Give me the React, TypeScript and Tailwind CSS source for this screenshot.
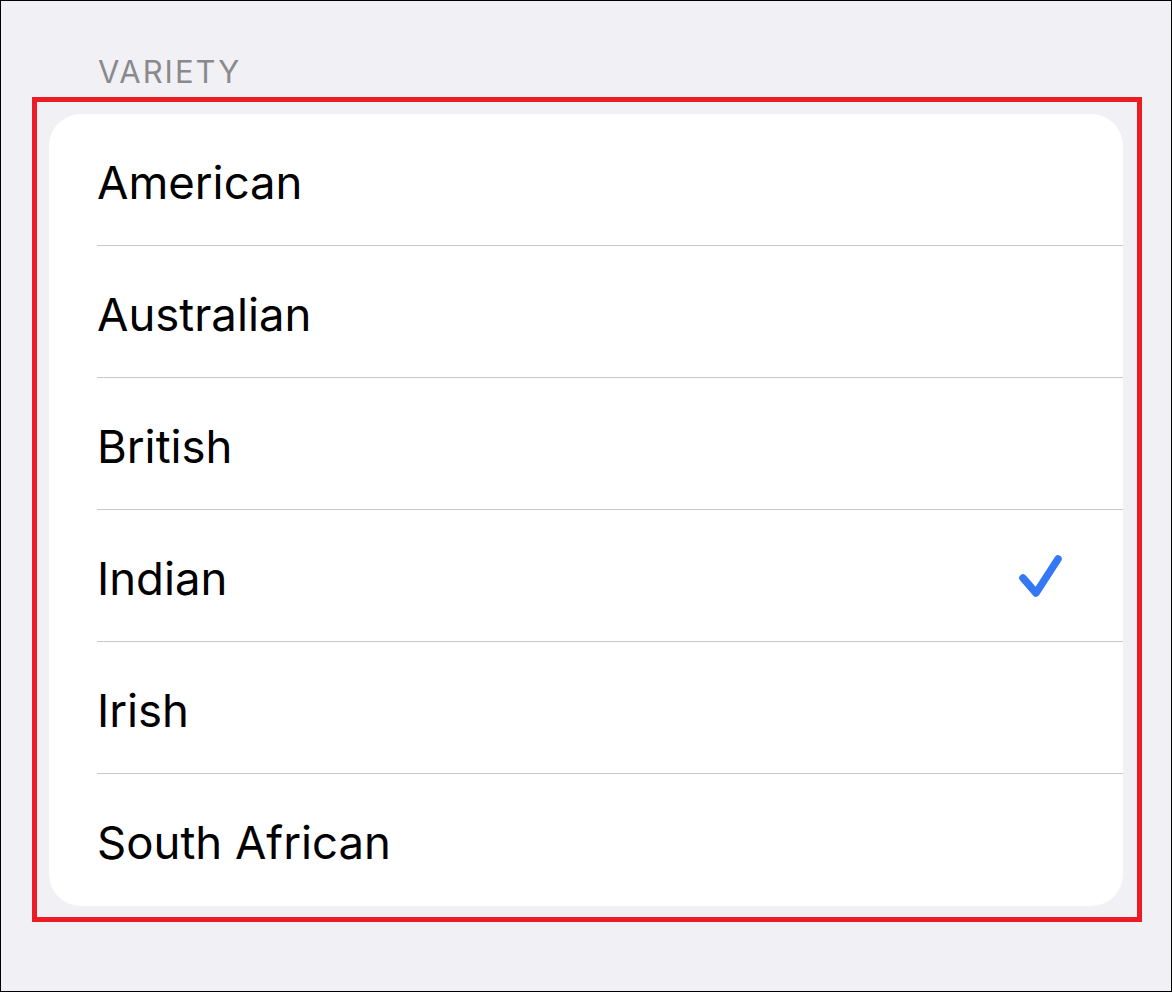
import React from 'react';

const VARIETIES = ['American', 'Australian', 'British', 'Indian', 'Irish', 'South African'];
const SELECTED = 'Indian';

const Check: React.FC = () => (
  <svg width="48" height="48" viewBox="0 0 48 48" fill="none" className="shrink-0">
    <polyline
      points="6,23 19,38 41,4"
      stroke="#3478f6"
      strokeWidth="7.5"
      strokeLinecap="round"
      strokeLinejoin="round"
    />
  </svg>
);

export default function App() {
  return (
    <div
      className="box-border w-[1172px] h-[992px] border border-black bg-[#f1f0f5] overflow-hidden"
      style={{ fontFamily: 'Inter, "Noto Sans", sans-serif' }}
    >
      {/* section header */}
      <div className="pt-[56px] pl-[97px] text-[31px] leading-[30px] tracking-[2px] text-[#8a8a8e]">
        VARIETY
      </div>

      {/* highlighted group */}
      <div className="box-border ml-[31px] mt-[10px] w-[1110px] h-[825px] border-[5px] border-[#ed1c24] pt-[12px] pl-[12px]">
        <div className="w-[1074px] rounded-[32px] bg-white overflow-hidden">
          {VARIETIES.map((name, i) => (
            <div key={name} className="h-[132px] flex pl-[48px]">
              <div
                className={`flex-1 flex items-center justify-between pt-[6px] pr-[58px] ${
                  i < VARIETIES.length - 1 ? 'border-b border-[#c8c8cb]' : ''
                }`}
              >
                <span className="text-[45.5px] leading-none text-black">{name}</span>
                {name === SELECTED && <Check />}
              </div>
            </div>
          ))}
        </div>
      </div>
    </div>
  );
}
